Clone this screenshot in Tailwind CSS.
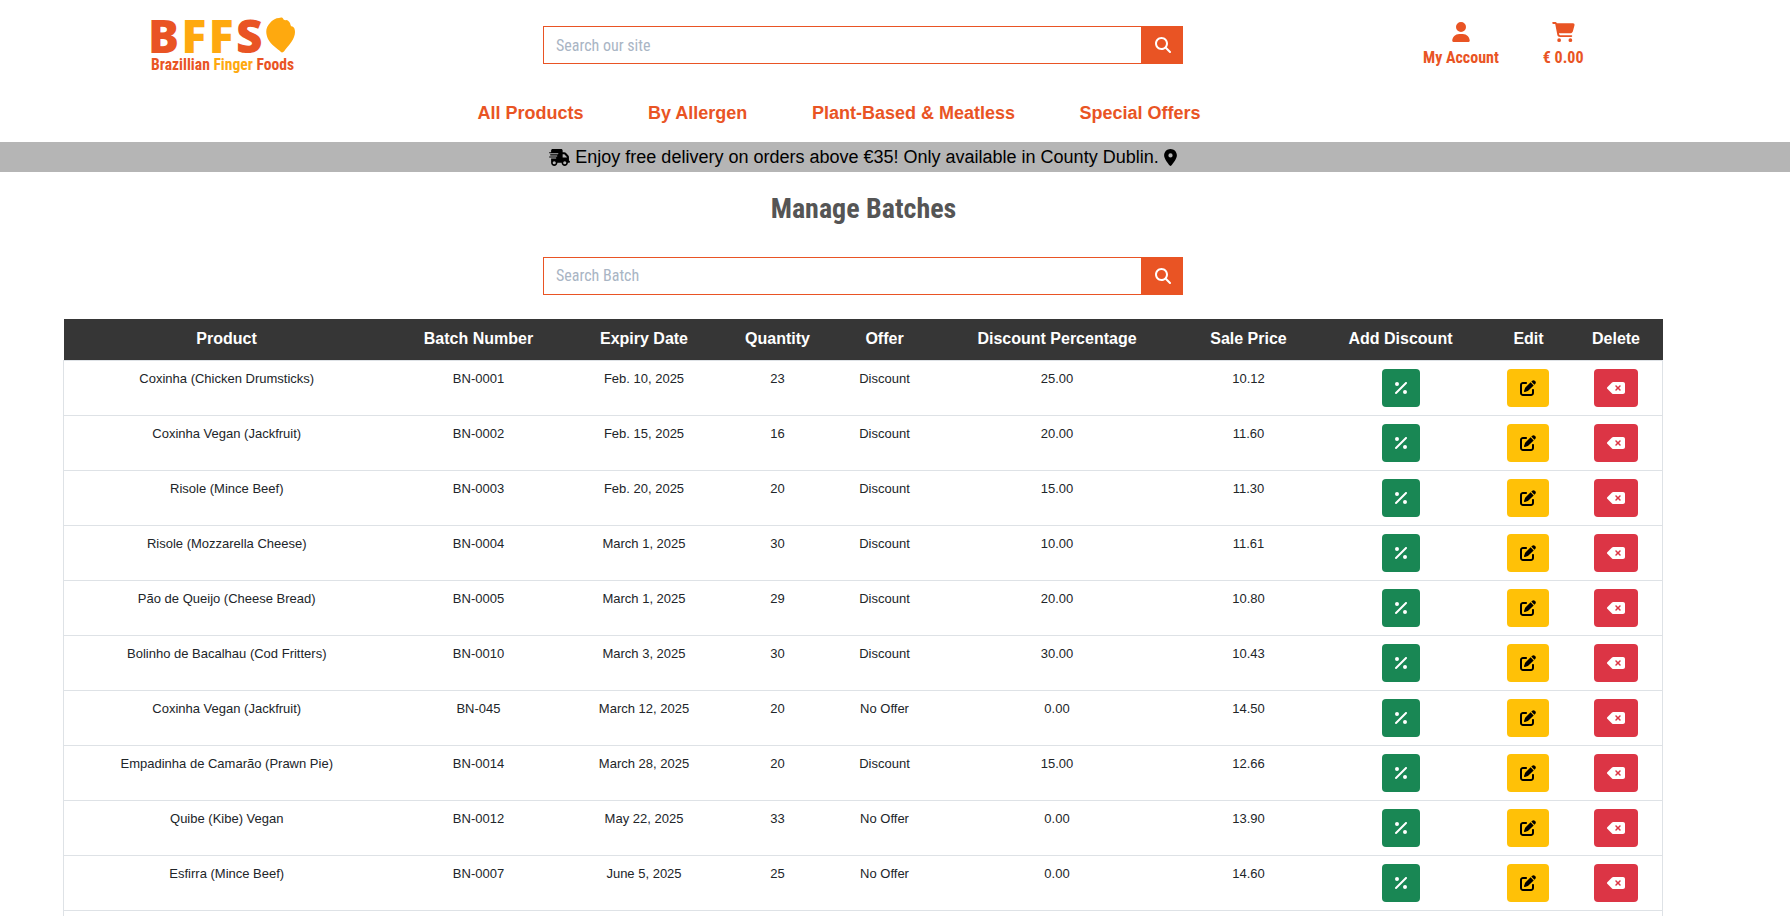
<!DOCTYPE html>
<html lang="en">
<head>
  <meta charset="UTF-8">
  <title>BFFS - Manage Batches</title>
  <script src="https://cdn.jsdelivr.net/npm/@tailwindcss/browser@4"></script>
</head>
<body class="bg-white h-[916px] overflow-hidden font-['Liberation_Sans',sans-serif] text-[#212529]">

  <svg class="hidden">
    <symbol id="i-search" viewBox="0 0 512 512"><path fill="currentColor" d="M416 208c0 45.9-14.9 88.3-40 122.7L502.6 457.4c12.5 12.5 12.5 32.8 0 45.3s-32.8 12.5-45.3 0L330.7 376c-34.4 25.2-76.8 40-122.7 40C93.1 416 0 322.9 0 208S93.1 0 208 0S416 93.1 416 208zM208 352a144 144 0 1 0 0-288 144 144 0 1 0 0 288z"/></symbol>
    <symbol id="i-percent" viewBox="0 0 384 512"><path fill="currentColor" d="M374.6 118.6c12.5-12.5 12.5-32.8 0-45.3s-32.8-12.5-45.3 0l-320 320c-12.5 12.5-12.5 32.8 0 45.3s32.8 12.5 45.3 0l320-320zM128 128A64 64 0 1 0 0 128a64 64 0 1 0 128 0zM384 384a64 64 0 1 0 -128 0 64 64 0 1 0 128 0z"/></symbol>
    <symbol id="i-edit" viewBox="0 0 512 512"><path fill="currentColor" d="M471.6 21.7c-21.9-21.9-57.3-21.9-79.2 0L362.3 51.7l97.9 97.9 30.1-30.1c21.9-21.9 21.9-57.3 0-79.2L471.6 21.7zm-299.2 220c-6.1 6.1-10.8 13.6-13.5 21.9l-29.6 88.8c-2.9 8.6-.6 18.1 5.8 24.6s15.9 8.7 24.6 5.8l88.8-29.6c8.2-2.7 15.7-7.4 21.9-13.5L437.7 172.3 339.7 74.3 172.4 241.7zM96 64C43 64 0 107 0 160V416c0 53 43 96 96 96H352c53 0 96-43 96-96V320c0-17.7-14.3-32-32-32s-32 14.3-32 32v96c0 17.7-14.3 32-32 32H96c-17.7 0-32-14.3-32-32V160c0-17.7 14.3-32 32-32h96c17.7 0 32-14.3 32-32s-14.3-32-32-32H96z"/></symbol>
    <symbol id="i-delete" viewBox="0 0 576 512"><path fill="currentColor" d="M576 128c0-35.3-28.7-64-64-64H205.3c-17 0-33.3 6.7-45.3 18.7L9.4 233.4c-6 6-9.4 14.1-9.4 22.6s3.4 16.6 9.4 22.6L160 429.3c12 12 28.3 18.7 45.3 18.7H512c35.3 0 64-28.7 64-64V128zM271 175c9.4-9.4 24.6-9.4 33.9 0l47 47 47-47c9.4-9.4 24.6-9.4 33.9 0s9.4 24.6 0 33.9l-47 47 47 47c9.4 9.4 9.4 24.6 0 33.9s-24.6 9.4-33.9 0l-47-47-47 47c-9.4 9.4-24.6 9.4-33.9 0s-9.4-24.6 0-33.9l47-47-47-47c-9.4-9.4-9.4-24.6 0-33.9z"/></symbol>
  </svg>

  <header>
    <div class="flex h-[90px] items-start">
      <div class="w-[543px] pl-[151px] pt-[14px] shrink-0">
        <div class="flex items-center h-[42px] -ml-[3px]">
          <span class="font-['Open_Sans',sans-serif] font-extrabold text-[46px] leading-none tracking-[2.5px] text-[#e95424]">B<span class="text-[#fea90f]">FF</span>S</span>
          <svg class="w-[30px] h-[36px] ml-[1px] shrink-0" viewBox="0 0 30 36"><path fill="#fea90f" d="M13 1C15 0 16.5 .5 17 1.5C17.5 3 19 3.5 20 3C22 3 23 4.5 24 6C24.5 8 25 10 26.5 9.5C28 10 29 12 29 15C29 22 23 28 19 33C18 35 16 36 15 35C11 31 5 28 2 22C-1 15 0 10 4 6C6 3 10 1 13 1Z"/></svg>
        </div>
        <div class="font-['Roboto',sans-serif] font-bold font-stretch-condensed text-[15.6px] leading-[18px] text-[#e95424] whitespace-nowrap">Brazillian <span class="text-[#fea90f]">Finger</span> Foods</div>
      </div>
      <form class="flex w-[640px] h-[38px] mt-[26px] shrink-0">
        <input class="flex-1 min-w-0 border border-[#e95424] px-3 pt-[2px] font-['Roboto',sans-serif] font-stretch-condensed text-base outline-none placeholder:text-[#a9b5c4]" placeholder="Search our site">
        <button type="button" class="w-[41px] bg-[#e95424] text-white flex items-center justify-center"><svg class="w-4 h-4"><use href="#i-search"/></svg></button>
      </form>
      <div class="flex flex-1 pt-[22px] pl-[240px] font-['Roboto',sans-serif] font-bold font-stretch-condensed text-base leading-5 text-[#e95424] gap-[44px]">
        <a class="flex flex-col items-center gap-[6px]">
          <svg class="w-[18px] h-[20px]" viewBox="0 0 448 512"><path fill="currentColor" d="M224 256A128 128 0 1 0 224 0a128 128 0 1 0 0 256zm-45.7 48C79.8 304 0 383.8 0 482.3C0 498.7 13.3 512 29.7 512H418.3c16.4 0 29.7-13.3 29.7-29.7C448 383.8 368.2 304 269.7 304H178.3z"/></svg>
          <span>My Account</span>
        </a>
        <a class="flex flex-col items-center gap-[6px]">
          <svg class="w-[23px] h-[20px]" viewBox="0 0 576 512"><path fill="currentColor" d="M0 24C0 10.7 10.7 0 24 0H69.5c22 0 41.5 12.8 50.6 32h411c26.3 0 45.5 25 38.6 50.4l-41 152.3c-8.5 31.4-37 53.3-69.5 53.3H170.7l5.4 28.5c2.2 11.3 12.1 19.5 23.6 19.5H488c13.3 0 24 10.7 24 24s-10.7 24-24 24H199.7c-34.6 0-64.3-24.6-70.7-58.5L77.4 54.5c-.7-3.8-4-6.5-7.9-6.5H24C10.7 48 0 37.3 0 24zM128 464a48 48 0 1 1 96 0 48 48 0 1 1 -96 0zm336-48a48 48 0 1 1 0 96 48 48 0 1 1 0-96z"/></svg>
          <span>€ 0.00</span>
        </a>
      </div>
    </div>
    <nav class="flex justify-center gap-[64.5px] h-[52px] items-center pb-[6px] pr-[112px] text-lg font-bold text-[#e95424]">
      <a>All Products</a>
      <a>By Allergen</a>
      <a>Plant-Based &amp; Meatless</a>
      <a>Special Offers</a>
    </nav>
    <div class="bg-[#b5b5b5] h-[30px] flex items-center justify-center gap-[5px] pr-[64px] text-lg text-black">
      <svg class="w-[21px] h-[17px]" viewBox="0 0 640 512"><path fill="currentColor" d="M112 0C85.5 0 64 21.5 64 48V96H16c-8.8 0-16 7.2-16 16s7.2 16 16 16H64 272c8.8 0 16 7.2 16 16s-7.2 16-16 16H64 48c-8.8 0-16 7.2-16 16s7.2 16 16 16H64 240c8.8 0 16 7.2 16 16s-7.2 16-16 16H64 16c-8.8 0-16 7.2-16 16s7.2 16 16 16H64 208c8.8 0 16 7.2 16 16s-7.2 16-16 16H64V416c0 53 43 96 96 96s96-43 96-96H384c0 53 43 96 96 96s96-43 96-96h32c17.7 0 32-14.3 32-32s-14.3-32-32-32V288 256 237.3c0-17-6.7-33.3-18.7-45.3L512 114.7c-12-12-28.3-18.7-45.3-18.7H416V48c0-26.5-21.5-48-48-48H112zM544 237.3V256H416V160h50.7L544 237.3zM160 368a48 48 0 1 1 0 96 48 48 0 1 1 0-96zm272 48a48 48 0 1 1 96 0 48 48 0 1 1 -96 0z"/></svg>
      <span>Enjoy free delivery on orders above €35! Only available in County Dublin.</span>
      <svg class="w-[13px] h-[17px]" viewBox="0 0 384 512"><path fill="currentColor" d="M215.7 499.2C267 435 384 279.4 384 192C384 86 298 0 192 0S0 86 0 192c0 87.4 117 243 168.3 307.2c12.3 15.3 35.1 15.3 47.4 0zM192 128a64 64 0 1 1 0 128 64 64 0 1 1 0-128z"/></svg>
    </div>
  </header>

  <main>
    <h2 class="font-['Roboto',sans-serif] font-bold font-stretch-condensed text-[28px] leading-[34px] text-[#555] text-center pt-[20px] pr-[63px]">Manage Batches</h2>
    <form class="flex w-[640px] h-[38px] ml-[543px] mt-[31px]">
      <input class="flex-1 min-w-0 border border-[#e95424] px-3 font-['Roboto',sans-serif] font-stretch-condensed text-base outline-none placeholder:text-[#a9b5c4]" placeholder="Search Batch">
      <button type="button" class="w-[41px] bg-[#e95424] text-white flex items-center justify-center"><svg class="w-4 h-4"><use href="#i-search"/></svg></button>
    </form>
    <table class="table-fixed border-collapse w-[1599px] ml-[63px] mt-[24px] text-center text-[13px]">
      <colgroup>
        <col class="w-[326px]"><col class="w-[178px]"><col class="w-[153px]"><col class="w-[114px]"><col class="w-[100px]">
        <col class="w-[245px]"><col class="w-[138px]"><col class="w-[166px]"><col class="w-[88px]"><col class="w-[91px]">
      </colgroup>
      <thead>
        <tr class="bg-[#363636] text-white text-base h-[41px]">
          <th class="font-bold">Product</th>
          <th class="font-bold">Batch Number</th>
          <th class="font-bold">Expiry Date</th>
          <th class="font-bold">Quantity</th>
          <th class="font-bold">Offer</th>
          <th class="font-bold">Discount Percentage</th>
          <th class="font-bold">Sale Price</th>
          <th class="font-bold">Add Discount</th>
          <th class="font-bold pl-[2px]">Edit</th>
          <th class="font-bold pr-[2px]">Delete</th>
        </tr>
      </thead>
      <tbody id="batches"></tbody>
    </table>
  </main>

  <script>
    const batches = [
      ["Coxinha (Chicken Drumsticks)", "BN-0001", "Feb. 10, 2025", "23", "Discount", "25.00", "10.12"],
      ["Coxinha Vegan (Jackfruit)", "BN-0002", "Feb. 15, 2025", "16", "Discount", "20.00", "11.60"],
      ["Risole (Mince Beef)", "BN-0003", "Feb. 20, 2025", "20", "Discount", "15.00", "11.30"],
      ["Risole (Mozzarella Cheese)", "BN-0004", "March 1, 2025", "30", "Discount", "10.00", "11.61"],
      ["Pão de Queijo (Cheese Bread)", "BN-0005", "March 1, 2025", "29", "Discount", "20.00", "10.80"],
      ["Bolinho de Bacalhau (Cod Fritters)", "BN-0010", "March 3, 2025", "30", "Discount", "30.00", "10.43"],
      ["Coxinha Vegan (Jackfruit)", "BN-045", "March 12, 2025", "20", "No Offer", "0.00", "14.50"],
      ["Empadinha de Camarão (Prawn Pie)", "BN-0014", "March 28, 2025", "20", "Discount", "15.00", "12.66"],
      ["Quibe (Kibe) Vegan", "BN-0012", "May 22, 2025", "33", "No Offer", "0.00", "13.90"],
      ["Esfirra (Mince Beef)", "BN-0007", "June 5, 2025", "25", "No Offer", "0.00", "14.60"]
    ];

    const tbody = document.getElementById("batches");
    batches.forEach(b => {
      const cells = b.map(v => `<td class="px-2 pt-[8px] align-top leading-[19.5px]">${v}</td>`).join("");
      tbody.innerHTML += `
        <tr class="h-[55px] border border-[#dee2e6]">
          ${cells}
          <td class="align-top pt-[8px]"><button class="w-[38px] h-[38px] rounded bg-[#198754] text-white inline-flex items-center justify-center"><svg class="w-[12px] h-[16px]"><use href="#i-percent"/></svg></button></td>
          <td class="align-top pt-[8px]"><button class="w-[42px] h-[38px] rounded bg-[#ffc107] text-black inline-flex items-center justify-center"><svg class="w-[16px] h-[16px]"><use href="#i-edit"/></svg></button></td>
          <td class="align-top pt-[8px] pr-[2px]"><button class="w-[44px] h-[38px] rounded bg-[#dc3545] text-white inline-flex items-center justify-center"><svg class="w-[18px] h-[16px]"><use href="#i-delete"/></svg></button></td>
        </tr>`;
    });
    // next row starts right at the bottom of the window, only its side borders show
    tbody.innerHTML += `<tr class="h-[55px] border border-[#dee2e6]"><td colspan="10"></td></tr>`;
  </script>

</body>
</html>
